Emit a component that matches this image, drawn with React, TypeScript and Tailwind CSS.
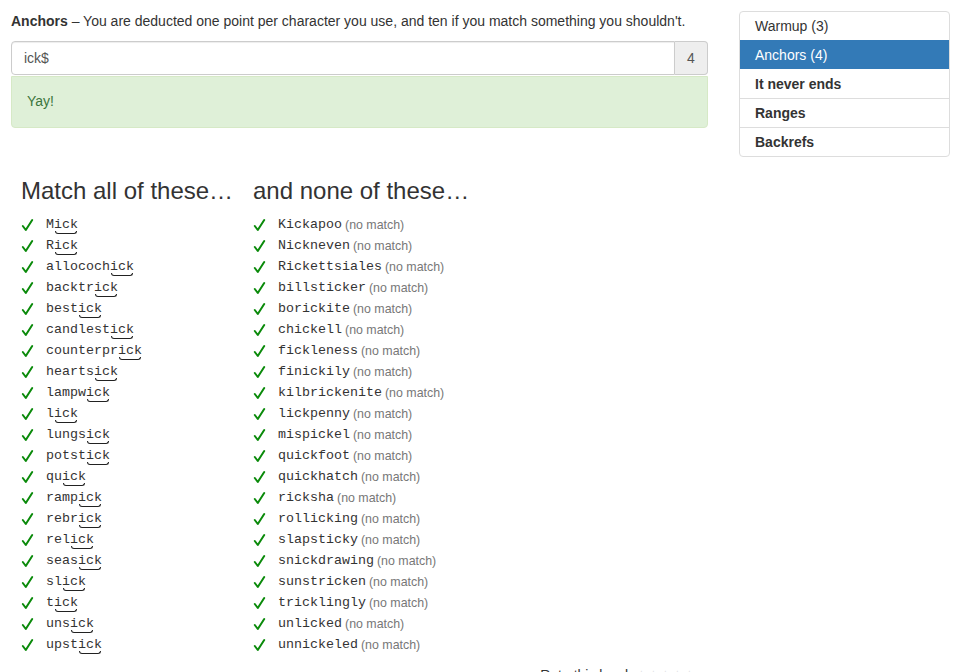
import React from "react";

const matchWords = [
  "Mick", "Rick", "allocochick", "backtrick", "bestick", "candlestick", "counterprick",
  "heartsick", "lampwick", "lick", "lungsick", "potstick", "quick", "rampick", "rebrick",
  "relick", "seasick", "slick", "tick", "unsick", "upstick",
];

const noneWords = [
  "Kickapoo", "Nickneven", "Rickettsiales", "billsticker", "borickite", "chickell",
  "fickleness", "finickily", "kilbrickenite", "lickpenny", "mispickel", "quickfoot",
  "quickhatch", "ricksha", "rollicking", "slapsticky", "snickdrawing", "sunstricken",
  "tricklingly", "unlicked", "unnickeled",
];

const Check = () => (
  <svg width="13" height="14" viewBox="0 0 13 14" className="shrink-0">
    <path d="M1.8 8 L4.8 12 L11.2 2" fill="none" stroke="#0a8a0a" strokeWidth="2" strokeLinecap="round" strokeLinejoin="round" />
  </svg>
);

const mono = { fontFamily: '"Liberation Mono", "Courier New", monospace' } as const;

export default function App() {
  return (
    <div
      className="min-h-[672px] bg-white text-[#333] text-[14px] leading-[20px] overflow-hidden"
      style={{ fontFamily: '"Liberation Sans", Arial, Helvetica, sans-serif' }}
    >
      <div className="flex pl-[11px] pr-[10px] pt-[11px]">
        {/* Left column */}
        <div className="w-[697px] shrink-0">
          <p className="h-[20px] mb-[10px]">
            <b>Anchors</b> – You are deducted one point per character you use, and ten if you match something you shouldn't.
          </p>
          <div className="flex h-[34px]">
            <div className="flex-1 border border-[#ccc] rounded-l-[4px] px-[12px] flex items-center text-[#555] shadow-[inset_0_1px_1px_rgba(0,0,0,0.075)]">
              ick$
            </div>
            <div className="w-[33px] border border-l-0 border-[#ccc] bg-[#eee] rounded-r-[4px] flex items-center justify-center text-[#555]">
              4
            </div>
          </div>
          <div className="mt-[1px] h-[52px] border border-[#d6e9c6] bg-[#dff0d8] text-[#3c763d] rounded-b-[4px] px-[15px] pt-[14px]">
            Yay!
          </div>

          <div className="flex pl-[10px] mt-[50px]">
            <div className="w-[232px] shrink-0">
              <h3 className="text-[24px] leading-[26px] font-normal text-[#333]">Match all of these…</h3>
              <ul className="mt-[10px]">
                {matchWords.map((w) => {
                  const pre = w.slice(0, w.length - 3);
                  return (
                    <li key={w} className="flex items-center h-[21px]">
                      <Check />
                      <span className="ml-[12px] text-[13.33px] leading-[14px] text-[#333]" style={mono}>
                        {pre}
                        <span className="relative inline-block">
                          ick
                          <span className="absolute left-[1px] right-[1px] bottom-[-2px] h-[3px] border border-t-0 border-[#222] rounded-b-[3px]" />
                        </span>
                      </span>
                    </li>
                  );
                })}
              </ul>
            </div>
            <div className="flex-1">
              <h3 className="text-[24px] leading-[26px] font-normal text-[#333]">and none of these…</h3>
              <ul className="mt-[10px]">
                {noneWords.map((w) => (
                  <li key={w} className="flex items-center h-[21px] whitespace-nowrap">
                    <Check />
                    <span className="ml-[12px] text-[13.33px] text-[#333]" style={mono}>
                      {w}
                    </span>
                    <span className="ml-[3px] text-[12.4px] text-[#777]">(no match)</span>
                  </li>
                ))}
              </ul>
            </div>
          </div>

          <div className="mt-[10px] flex justify-end pr-[12px]">
            <span className="text-[#333]">Rate this level:</span>
            <span className="ml-[4px] text-[#ddd] text-[12px] tracking-[1px]">★★★★★</span>
          </div>
        </div>

        {/* Right column */}
        <div className="ml-[31px] w-[211px] shrink-0">
          <ul className="border border-[#ddd] rounded-[4px] overflow-hidden">
            <li className="h-[28px] px-[15px] flex items-center">Warmup (3)</li>
            <li className="h-[29px] px-[15px] flex items-center bg-[#337ab7] text-white">Anchors (4)</li>
            <li className="h-[29px] px-[15px] flex items-center font-bold">It never ends</li>
            <li className="h-[29px] px-[15px] flex items-center font-bold border-t border-[#ddd]">Ranges</li>
            <li className="h-[29px] px-[15px] flex items-center font-bold border-t border-[#ddd]">Backrefs</li>
          </ul>
        </div>
      </div>
    </div>
  );
}
